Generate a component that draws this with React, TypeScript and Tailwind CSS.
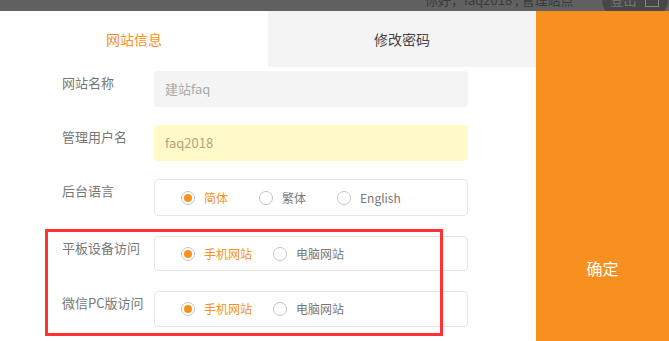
import React from "react";

const font = { fontFamily: '"Microsoft YaHei", "Noto Sans CJK SC", "Noto Sans", sans-serif' };

type Option = { label: string; checked?: boolean; width: string };

const Radio = ({ label, checked, width }: Option) => (
  <label className={`flex items-center ${width}`}>
    <span className="flex h-[14px] w-[14px] items-center justify-center rounded-full border border-[#c4c4c4] bg-white">
      {checked && <span className="h-[8px] w-[8px] rounded-full bg-[#f7921e]" />}
    </span>
    <span className={`ml-[9px] text-[12px] ${checked ? "text-[#f7921e]" : "text-[#777]"}`}>{label}</span>
  </label>
);

const Row = ({ label, mt, children }: { label: string; mt: string; children: React.ReactNode }) => (
  <div className={`flex ${mt}`}>
    <div className="w-[92px] pt-[2px] text-[13px] leading-[20px] text-[#777]">{label}</div>
    {children}
  </div>
);

const RadioBox = ({ options, h }: { options: Option[]; h: string }) => (
  <div className={`flex ${h} w-[314px] items-center rounded-[4px] border border-[#e6e6e6] pl-[26px]`}>
    {options.map((o) => (
      <Radio key={o.label} {...o} />
    ))}
  </div>
);

export default function App() {
  return (
    <div className="relative h-[341px] w-[669px] overflow-hidden bg-white" style={font}>
      <div className="h-[11px] overflow-hidden bg-[#616161]">
        <div className="-mt-[17px] flex h-[34px] items-center pl-[425px]">
          <span className="text-[13px] text-[#3a3a3a]">你好，faq2018 , 管理站点</span>
          <div className="ml-[28px] flex h-[34px] w-[66px] items-center justify-center gap-[8px] rounded-full bg-[#474747]">
            <span className="text-[13px] text-[#777]">登出</span>
            <span className="h-[14px] w-[14px] border border-[#888]" />
          </div>
        </div>
      </div>
      <div className="flex">
        <div className="w-[536px]">
          <div className="flex h-[56px]">
            <div className="flex w-[268px] items-center justify-center text-[14px] text-[#f7921e]">网站信息</div>
            <div className="flex w-[268px] items-center justify-center bg-[#f4f4f4] text-[14px] text-[#444]">修改密码</div>
          </div>
          <div className="pl-[62px]">
            <Row label="网站名称" mt="mt-[4px]">
              <div className="flex h-[36px] w-[314px] items-center rounded-[4px] bg-[#f4f4f4] pl-[11px] text-[13px] text-[#aaa]">
                建站faq
              </div>
            </Row>
            <Row label="管理用户名" mt="mt-[18px]">
              <div className="flex h-[36px] w-[314px] items-center rounded-[4px] bg-[#fffac8] pl-[11px] text-[13px] text-[#b3a27a]">
                faq2018
              </div>
            </Row>
            <Row label="后台语言" mt="mt-[18px]">
              <RadioBox
                h="h-[37px]"
                options={[
                  { label: "简体", checked: true, width: "w-[78px]" },
                  { label: "繁体", width: "w-[78px]" },
                  { label: "English", width: "w-[90px]" },
                ]}
              />
            </Row>
            <Row label="平板设备访问" mt="mt-[20px]">
              <RadioBox
                h="h-[35px]"
                options={[
                  { label: "手机网站", checked: true, width: "w-[92px]" },
                  { label: "电脑网站", width: "w-[92px]" },
                ]}
              />
            </Row>
            <Row label="微信PC版访问" mt="mt-[20px]">
              <RadioBox
                h="h-[36px]"
                options={[
                  { label: "手机网站", checked: true, width: "w-[92px]" },
                  { label: "电脑网站", width: "w-[92px]" },
                ]}
              />
            </Row>
          </div>
        </div>
        <div className="flex h-[330px] flex-1 justify-center bg-[#f7901e] pt-[246px]">
          <span className="text-[16px] leading-[22px] text-white">确定</span>
        </div>
      </div>
      <div className="absolute left-[45px] top-[229px] h-[107px] w-[398px] border-[3px] border-[#f33]" />
    </div>
  );
}
